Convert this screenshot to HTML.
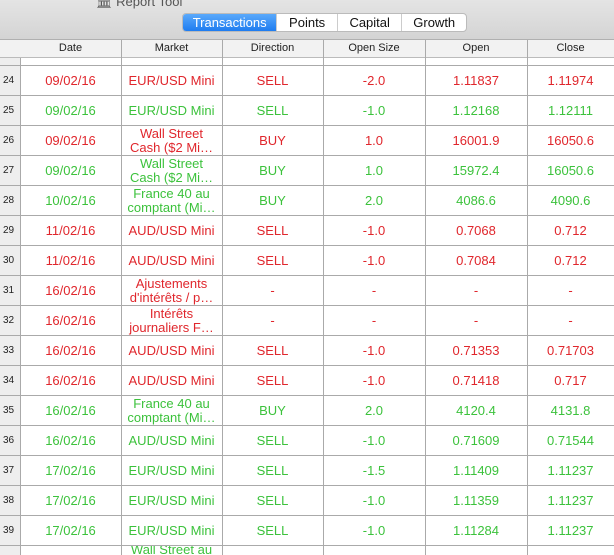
<!DOCTYPE html>
<html style="overflow:hidden;width:614px;height:555px"><head><meta charset="utf-8"><style>
*{margin:0;padding:0;box-sizing:border-box}
body{width:614px;height:555px;overflow:hidden;background:#fff;font-family:"Liberation Sans",Arial,sans-serif;position:relative}
.top{position:absolute;left:0;top:0;width:614px;height:40px;background:linear-gradient(#e4e4e4,#d4d4d4);border-bottom:1px solid #b0b0b0}
.title{position:absolute;left:96px;top:-6px;font-size:13px;color:#555}
.seg{position:absolute;left:182px;top:13px;height:19px;width:285px;border:1px solid #bbb;border-radius:4px;background:#fff;display:flex;font-size:13px;overflow:hidden}
.seg div{text-align:center;line-height:17px;border-right:1px solid #ccc;color:#111}
.seg .on{background:linear-gradient(#5aa9fb,#1e7cf0);color:#fff}
.hdr{position:absolute;left:0;top:40px;width:614px;height:18px;background:#f2f2f2;border-bottom:1px solid #bbb;font-size:11px;color:#222}
.hdr div,.row div{position:absolute;top:0;text-align:center}
.row{position:absolute;left:0;width:614px;height:30px;border-bottom:1px solid #aaa;font-size:13px;overflow:hidden}
.row div{height:30px;display:flex;align-items:center;justify-content:center;line-height:14px}
.row .n{left:0;width:20px;background:#eee;color:#222;font-size:10px;justify-content:flex-start;padding-left:3px}
.vl{position:absolute;top:40px;width:1px;height:515px;background:#aaa}
.r{color:#e0262c}.g{color:#3cc23c}
.c1{left:20px;width:101px}.c2{left:121px;width:101px}.c3{left:222px;width:101px}.c4{left:323px;width:102px}.c5{left:425px;width:102px}.c6{left:527px;width:87px}
</style></head><body>
<div class="top"><div class="title">🏛 Report Tool</div>
<div class="seg"><div class="on" style="width:95px">Transactions</div><div style="width:61px">Points</div><div style="width:65px">Capital</div><div style="width:64px;border:0">Growth</div></div></div>
<div class="hdr"><div class="c1" style="line-height:17px">Date</div><div class="c2" style="line-height:17px">Market</div><div class="c3" style="line-height:17px">Direction</div><div class="c4" style="line-height:17px">Open Size</div><div class="c5" style="line-height:17px">Open</div><div class="c6" style="line-height:17px">Close</div></div>
<div class="row" style="top:58px;height:8px"><div class="n"></div></div>
<div class="row r" style="top:66px"><div class="n">24</div><div class="c1">09/02/16</div><div class="c2">EUR/USD Mini</div><div class="c3">SELL</div><div class="c4">-2.0</div><div class="c5">1.11837</div><div class="c6">1.11974</div></div>
<div class="row g" style="top:96px"><div class="n">25</div><div class="c1">09/02/16</div><div class="c2">EUR/USD Mini</div><div class="c3">SELL</div><div class="c4">-1.0</div><div class="c5">1.12168</div><div class="c6">1.12111</div></div>
<div class="row r" style="top:126px"><div class="n">26</div><div class="c1">09/02/16</div><div class="c2">Wall Street<br>Cash ($2 Mi…</div><div class="c3">BUY</div><div class="c4">1.0</div><div class="c5">16001.9</div><div class="c6">16050.6</div></div>
<div class="row g" style="top:156px"><div class="n">27</div><div class="c1">09/02/16</div><div class="c2">Wall Street<br>Cash ($2 Mi…</div><div class="c3">BUY</div><div class="c4">1.0</div><div class="c5">15972.4</div><div class="c6">16050.6</div></div>
<div class="row g" style="top:186px"><div class="n">28</div><div class="c1">10/02/16</div><div class="c2">France 40 au<br>comptant (Mi…</div><div class="c3">BUY</div><div class="c4">2.0</div><div class="c5">4086.6</div><div class="c6">4090.6</div></div>
<div class="row r" style="top:216px"><div class="n">29</div><div class="c1">11/02/16</div><div class="c2">AUD/USD Mini</div><div class="c3">SELL</div><div class="c4">-1.0</div><div class="c5">0.7068</div><div class="c6">0.712</div></div>
<div class="row r" style="top:246px"><div class="n">30</div><div class="c1">11/02/16</div><div class="c2">AUD/USD Mini</div><div class="c3">SELL</div><div class="c4">-1.0</div><div class="c5">0.7084</div><div class="c6">0.712</div></div>
<div class="row r" style="top:276px"><div class="n">31</div><div class="c1">16/02/16</div><div class="c2">Ajustements<br>d'intérêts / p…</div><div class="c3">-</div><div class="c4">-</div><div class="c5">-</div><div class="c6">-</div></div>
<div class="row r" style="top:306px"><div class="n">32</div><div class="c1">16/02/16</div><div class="c2">Intérêts<br>journaliers F…</div><div class="c3">-</div><div class="c4">-</div><div class="c5">-</div><div class="c6">-</div></div>
<div class="row r" style="top:336px"><div class="n">33</div><div class="c1">16/02/16</div><div class="c2">AUD/USD Mini</div><div class="c3">SELL</div><div class="c4">-1.0</div><div class="c5">0.71353</div><div class="c6">0.71703</div></div>
<div class="row r" style="top:366px"><div class="n">34</div><div class="c1">16/02/16</div><div class="c2">AUD/USD Mini</div><div class="c3">SELL</div><div class="c4">-1.0</div><div class="c5">0.71418</div><div class="c6">0.717</div></div>
<div class="row g" style="top:396px"><div class="n">35</div><div class="c1">16/02/16</div><div class="c2">France 40 au<br>comptant (Mi…</div><div class="c3">BUY</div><div class="c4">2.0</div><div class="c5">4120.4</div><div class="c6">4131.8</div></div>
<div class="row g" style="top:426px"><div class="n">36</div><div class="c1">16/02/16</div><div class="c2">AUD/USD Mini</div><div class="c3">SELL</div><div class="c4">-1.0</div><div class="c5">0.71609</div><div class="c6">0.71544</div></div>
<div class="row g" style="top:456px"><div class="n">37</div><div class="c1">17/02/16</div><div class="c2">EUR/USD Mini</div><div class="c3">SELL</div><div class="c4">-1.5</div><div class="c5">1.11409</div><div class="c6">1.11237</div></div>
<div class="row g" style="top:486px"><div class="n">38</div><div class="c1">17/02/16</div><div class="c2">EUR/USD Mini</div><div class="c3">SELL</div><div class="c4">-1.0</div><div class="c5">1.11359</div><div class="c6">1.11237</div></div>
<div class="row g" style="top:516px"><div class="n">39</div><div class="c1">17/02/16</div><div class="c2">EUR/USD Mini</div><div class="c3">SELL</div><div class="c4">-1.0</div><div class="c5">1.11284</div><div class="c6">1.11237</div></div>
<div class="row g" style="top:546px;height:9px;border:0"><div class="n" style="height:9px"></div><div class="c2" style="align-items:flex-start;height:9px;line-height:9px;top:-1px">Wall Street au</div></div>
<div class="vl" style="left:20px;top:58px;height:497px"></div><div class="vl" style="left:121px"></div><div class="vl" style="left:222px"></div><div class="vl" style="left:323px"></div><div class="vl" style="left:425px"></div><div class="vl" style="left:527px"></div>
</body></html>
